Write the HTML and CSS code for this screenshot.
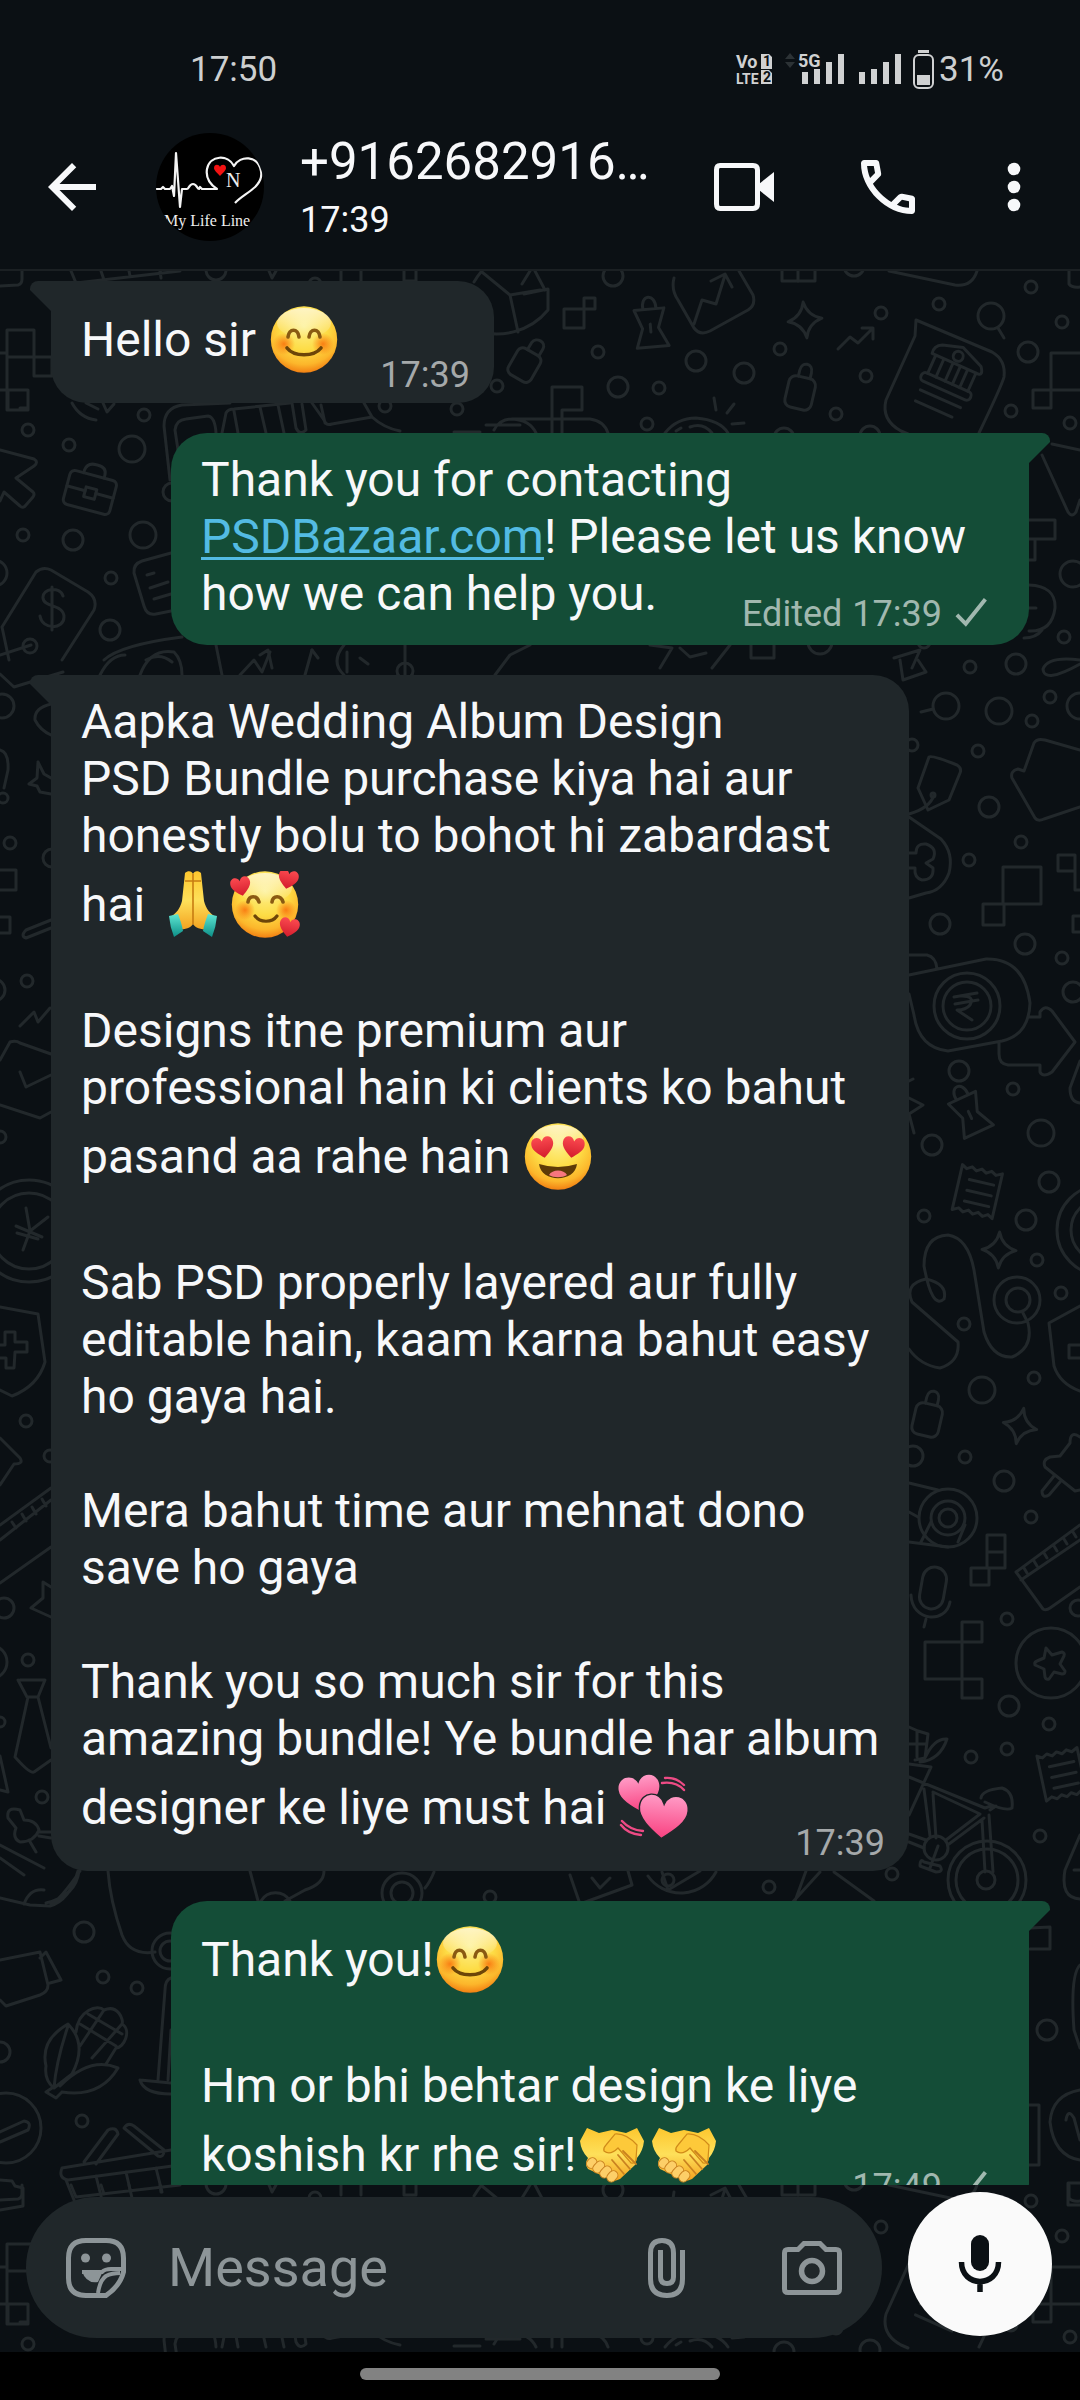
FILE: index.html
```html
<!DOCTYPE html>
<html lang="en">
<head>
<meta charset="utf-8">
<meta name="viewport" content="width=device-width, initial-scale=1">
<title>Chat</title>
<link rel="stylesheet" href="styles.css">
</head>
<body>
<svg class="defs" aria-hidden="true">
  <defs>
    <radialGradient id="face" cx="0.5" cy="0.3" r="0.72">
      <stop offset="0" stop-color="#fdf08e"/>
      <stop offset="0.5" stop-color="#fddc45"/>
      <stop offset="0.8" stop-color="#fcb62b"/>
      <stop offset="1" stop-color="#f0780f"/>
    </radialGradient>
    <linearGradient id="shine" x1="0" y1="0" x2="0" y2="1">
      <stop offset="0" stop-color="#fff" stop-opacity="0.65"/>
      <stop offset="1" stop-color="#fff" stop-opacity="0"/>
    </linearGradient>
    <radialGradient id="blush">
      <stop offset="0" stop-color="#f9700c" stop-opacity="0.85"/>
      <stop offset="1" stop-color="#f9700c" stop-opacity="0"/>
    </radialGradient>
    <linearGradient id="red" x1="0" y1="0" x2="0" y2="1">
      <stop offset="0" stop-color="#fb4a50"/>
      <stop offset="1" stop-color="#d31c2c"/>
    </linearGradient>
    <linearGradient id="pink" x1="0" y1="0" x2="0" y2="1">
      <stop offset="0" stop-color="#ff9bc6"/>
      <stop offset="1" stop-color="#f9407f"/>
    </linearGradient>
    <linearGradient id="skin" x1="0" y1="0" x2="0" y2="1">
      <stop offset="0" stop-color="#fdc62e"/>
      <stop offset="0.5" stop-color="#fee05a"/>
      <stop offset="1" stop-color="#f3a11f"/>
    </linearGradient>
    <linearGradient id="teal" x1="0" y1="0" x2="0" y2="1">
      <stop offset="0" stop-color="#5fe6d3"/>
      <stop offset="1" stop-color="#0c8f87"/>
    </linearGradient>
    <path id="heart" d="M0 9C-5 5-10 1-10-4C-10-11-2-12 0-6C2-12 10-11 10-4C10 1 5 5 0 9Z"/>
    <symbol id="e-blush" viewBox="0 0 72 67">
      <circle cx="36" cy="33.500" r="33.200" fill="url(#face)"/>
      <ellipse cx="36" cy="17" rx="27" ry="15" fill="url(#shine)"/>
      <circle cx="16" cy="38" r="11" fill="url(#blush)"/>
      <circle cx="55" cy="38" r="11" fill="url(#blush)"/>
      <path d="M20 31C21 22 30 22 31 31M41 31C42 22 51 22 52 31" fill="none" stroke="#8a5a12" stroke-width="3.600" stroke-linecap="round"/>
      <path d="M19 42C26 51 46 51 53 42" fill="none" stroke="#6d4508" stroke-width="3.600" stroke-linecap="round"/>
    </symbol>
    <symbol id="e-love" viewBox="0 0 72 67">
      <circle cx="36" cy="33.500" r="33.200" fill="url(#face)"/>
      <ellipse cx="36" cy="17" rx="27" ry="15" fill="url(#shine)"/>
      <circle cx="16" cy="39" r="10" fill="url(#blush)"/>
      <circle cx="57" cy="39" r="10" fill="url(#blush)"/>
      <path d="M19 31C20 24 28 24 30 31M43 31C44 24 52 24 54 31" fill="none" stroke="#8a5a12" stroke-width="3.600" stroke-linecap="round"/>
      <path d="M26 45C31 52 43 52 48 45" fill="none" stroke="#6d4508" stroke-width="3.200" stroke-linecap="round"/>
      <use href="#heart" fill="url(#red)" transform="translate(12 16) rotate(-12)"/>
      <use href="#heart" fill="url(#red)" transform="translate(59 9) rotate(12)"/>
      <use href="#heart" fill="url(#red)" transform="translate(60 57) rotate(12)"/>
    </symbol>
    <symbol id="e-eyes" viewBox="0 0 72 67">
      <circle cx="36" cy="33.500" r="33.200" fill="url(#face)"/>
      <ellipse cx="36" cy="15" rx="25" ry="13" fill="url(#shine)"/>
      <use href="#heart" fill="url(#red)" transform="translate(21 25) rotate(-10) scale(1.100)"/>
      <use href="#heart" fill="url(#red)" transform="translate(51 25) rotate(10) scale(1.100)"/>
      <path d="M17 41Q36 47 55 41C53 60 19 60 17 41Z" fill="#5d3a07"/>
      <path d="M27 52C30 46 42 46 45 52C40 55 32 55 27 52Z" fill="#f7767e"/>
    </symbol>
    <symbol id="e-pray" viewBox="0 0 72 67">
      <path d="M28 2C31-1 35 0 36 3C37 0 41-1 44 2L47 30C49 38 53 42 57 45L50 59C44 58 38 57 36 53C34 57 28 58 22 59L15 45C19 42 23 38 25 30Z" fill="url(#skin)"/>
      <path d="M36 3V53M28 10H44" fill="none" stroke="#c77c12" stroke-width="1.600"/>
      <path d="M12 45L21 43C23 48 25 54 26 60L17 66Q13 56 12 45ZM60 45L51 43C49 48 47 54 46 60L55 66Q59 56 60 45Z" fill="url(#teal)"/>
    </symbol>
    <symbol id="e-hearts" viewBox="0 0 72 67">
      <use href="#heart" fill="url(#pink)" transform="translate(22 21) rotate(-8) scale(2.050 1.900)"/>
      <use href="#heart" fill="url(#pink)" stroke="#20272a" stroke-width="0.600" transform="translate(45 44) rotate(5) scale(2.450 2.300)"/>
      <path d="M44 9Q58 7 66 16M47 4Q58 3 66 11M23 61Q10 60 3 51M25 57Q12 56 4 47" fill="none" stroke="#ee4b85" stroke-width="2.400" stroke-linecap="round"/>
    </symbol>
    <symbol id="e-shake" viewBox="0 0 72 67">
      <path d="M4 20L11 7L23 12L36 9L50 12L61 7L68 20Q67 30 61 37L59 44L44 58Q37 62 31 57L12 48Q8 43 12 37Q5 30 4 20Z" fill="url(#skin)"/>
      <path d="M30 24L39 13Q50 12 61 24L60 38Q60 43 55 42L42 27Q34 35 28 30Q27 27 30 24Z" fill="#fdc93a" stroke="#d18b19" stroke-width="1.200"/>
      <g fill="#fdcf68" stroke="#c98220" stroke-width="1">
        <rect x="10" y="38" width="11" height="9" rx="4.500" transform="rotate(-48 15 42)"/>
        <rect x="16" y="42" width="13" height="9" rx="4.500" transform="rotate(-48 22 46)"/>
        <rect x="23" y="47" width="13" height="9" rx="4.500" transform="rotate(-48 29 51)"/>
        <rect x="30" y="51" width="12" height="9" rx="4.500" transform="rotate(-48 36 55)"/>
      </g>
      <path d="M36 39L48 53M42 34L54 48M47 30L60 43" fill="none" stroke="#c98220" stroke-width="1.800" stroke-linecap="round"/>
    </symbol>
    <symbol id="tick" viewBox="0 0 54 42">
      <path d="M5 22L14 31L34 6" fill="none" stroke="currentColor" stroke-width="4"/>
    </symbol>
  </defs>
</svg>

<div class="phone">
  <div class="status">
    <span class="status-time">17:50</span>
    <svg class="status-icons" viewBox="734 46 202 46" role="img" aria-label="VoLTE, 5G signal, battery">
      <g fill="#d0d1d2">
        <text class="tiny-bold" x="736" y="67">Vo</text>
        <text class="tiny-narrow" x="736" y="83">LTE</text>
        <path d="M761 53h8l3 3v12h-11zM761 69h8l3 3v11h-11z"/>
        <text class="tiny-bold" x="798" y="66">5G</text>
        <path d="M802 71h6v12h-6zM814 68h6v15h-6zM826 61h6v22h-6zM838 53h6v30h-6zM859 71h6v12h-6zM871 68h6v15h-6zM883 61h6v22h-6zM895 53h6v30h-6z"/>
        <path d="M918 49h11v3h-11zM917 74h13v10h-13z"/>
      </g>
      <rect x="914" y="54" width="19" height="33" rx="5" fill="none" stroke="#d0d1d2" stroke-width="2"/>
      <path d="M785 58l5-6 5 6zM785 61l5 6 5-6z" fill="#2c3235"/>
      <g fill="#0b1014"><text class="tiny-digit" x="763" y="65">1</text><text class="tiny-digit" x="763" y="81">2</text></g>
    </svg>
    <span class="status-battery">31%</span>
  </div>

  <header class="topbar">
    <button class="icon-btn" aria-label="Back">
      <svg viewBox="0 0 24 24"><path fill="currentColor" d="M20 11H7.830l5.590-5.590L12 4l-8 8 8 8 1.410-1.410L7.830 13H20z"/></svg>
    </button>
    <svg class="avatar" viewBox="0 0 108 108" role="img" aria-label="Profile photo">
      <clipPath id="round"><circle cx="54" cy="54" r="54"/></clipPath>
      <g clip-path="url(#round)">
        <rect width="108" height="108"/>
        <path d="M0 56H5L7 54L9 56H14L16 53L18 63L20 20L24 74L26 56H31C33 56 33 51 37 51C41 51 41 56 43 56L44 54L46 56H61C52 50 50 42 51 36C54 22 72 21 78 33C84 22 102 22 105 38C108 54 88 60 79 70" fill="none" stroke="#f4f4f4" stroke-width="2.200" stroke-linejoin="round"/>
        <path d="M64 43C60 39 58 37 58 35C58 31 63 31 64 34C65 31 70 31 70 35C70 37 68 39 64 43Z" fill="#f31212"/>
        <g class="avatar-text" fill="#eee"><text x="70" y="54" font-size="20">N</text><text x="8" y="93" font-size="16">My Life Line</text></g>
      </g>
    </svg>
    <div class="contact">
      <h1 class="contact-name">+9162682916…</h1>
      <p class="contact-seen">17:39</p>
    </div>
    <div class="actions">
      <button class="icon-btn" aria-label="Video call">
        <svg viewBox="0 0 72 72"><path d="M12 14.500H45Q49.500 14.500 49.500 19V53Q49.500 57.500 45 57.500H12Q8.500 57.500 8.500 53V19Q8.500 14.500 12 14.500Z" fill="none" stroke="currentColor" stroke-width="5"/><path d="M51 33L66 21V51L51 39Z" fill="currentColor"/></svg>
      </button>
      <button class="icon-btn" aria-label="Voice call">
        <svg viewBox="0 0 24 24"><path fill="currentColor" d="M19.950 21q-3.120 0-6.180-1.360t-5.540-3.860-3.860-5.540T3 4.050Q3 3.600 3.300 3.300T4.050 3H8.100q.35 0 .62.240t.33.560l.65 3.500q.05.400-.020.680T9.400 8.450L6.980 10.900q.5.930 1.190 1.790t1.510 1.660q.78.780 1.630 1.440t1.790 1.210l2.350-2.350q.23-.23.590-.34t.71-.060l3.450.7q.35.100.58.360t.22.590v4.050q0 .45-.3.750T19.950 21zM6.030 9l1.650-1.650L7.250 5H5.020q.13 1.020.35 2.020T6.030 9zm8.940 8.950q.98.430 1.990.68t2.040.32v-2.200l-2.350-.47z"/></svg>
      </button>
      <button class="icon-btn icon-btn-last" aria-label="More options">
        <svg viewBox="0 0 24 24"><g fill="currentColor"><circle cx="12" cy="6" r="2.100"/><circle cx="12" cy="12" r="2.100"/><circle cx="12" cy="18" r="2.100"/></g></svg>
      </button>
    </div>
  </header>

  <main class="conversation">
    <svg class="wallpaper" viewBox="0 271 1080 2081" preserveAspectRatio="xMidYMin slice" aria-hidden="true">
      <defs>
        <path id="spark" d="M0-18Q3-4 17 0Q3 4 0 18Q-3 4-17 0Q-3-4 0-18Z"/>
        <path id="pin" d="M-16-24L14-24L7-5L16 14L-16 14L-9-5ZM-7-24C-9-40 7-40 6-24M-1-9V-1"/>
        <g id="receipt"><path d="M-22-22l5 3 5-3 5 3 5-3 5 3 5-3 5 3 6-3V24l-5-3-5 3-5-3-5 3-5-3-5 3-5-3-6 3ZM-12-9H13M-12 2H13M-12 13H13"/></g>
        <g id="case"><rect x="-24" y="-17" width="48" height="35" rx="5"/><path d="M-11-17V-20Q-10-28-1-28H1Q10-28 10-20V-17M-24 0H-5M6 0H24"/><rect x="-5" y="-4" width="11" height="10"/></g>
        <g id="lock"><rect x="-13" y="-10" width="27" height="32" rx="7"/><path d="M-5-10V-16C-5-26 7-26 7-16V-10"/></g>
        <g id="tile-head">
          <path d="M0 286L18 285Q22 284 22 279V271M71 271L76 283L180 271M101 271L104 280M129 271L130 276M160 271L161 278M269 271L272 278L276 271M341 271V281M361 271V281M404 271V281H416V271M535 271L545 290"/>
          <path d="M7 330H34V357H7ZM0 353H7M7 357V410M34 357H52V376H34ZM8 390H28V410H8ZM0 390H8M28 408H20"/>
          <circle cx="216" cy="270" r="10"/><circle cx="315" cy="284" r="6"/>
          <path d="M474 282Q500 238 560 250M482 272L510 295L540 290M510 295L518 332M470 329C500 340 530 332 548 310V289L524 294M522 284L530 271"/>
          <g transform="translate(525 362) rotate(30)"><rect x="-12" y="-12" width="26" height="30" rx="6"/><path d="M-4-12V-20C-3-28 9-28 9-20V-12"/></g>
          <path d="M72 403Q80 418 96 420M86 403L98 409M103 403L107 412L114 404"/>
          <path d="M170 480L164 426Q164 408 182 405L230 403M181 470L175 430Q176 420 186 419L208 416Q215 417 216 433M222 433L226 413Q228 409 234 409L290 403M234 411L238 433M260 407L266 433M278 405L284 433M292 403L296 428Q300 436 306 430L302 404M312 403L324 420Q326 426 332 424L372 417L364 403M372 417Q384 428 400 431M325 423L321 405"/>
          <path d="M454 432H480M494 430Q500 419 512 419H590Q604 421 608 433M512 419Q530 420 536 433M520 425H486"/>
          <rect x="564" y="309" width="20" height="19"/><rect x="584" y="298" width="11" height="11"/>
          <use href="#pin" transform="translate(652 333) rotate(-5)"/>
          <path d="M674 278Q671 290 678 300L694 328Q700 336 710 331L748 310Q756 305 753 295L739 271M694 324L702 300L716 304L725 275M711 281L725 274L732 287"/>
          <rect x="782" y="262" width="33" height="19"/><path d="M798 271V281"/>
          <path d="M889 271L955 285Q972 287 977 271M1069 271V284Q1072 288 1080 287"/>
          <use href="#spark" transform="translate(805 320) rotate(-6)"/>
          <path d="M838 349L850 337L858 343L873 328M862 328H873V339"/>
          <use href="#lock" transform="translate(801 387) rotate(13)"/>
          <path d="M552 433V387H582V410H562V433M714 398L716 410M734 404L727 413M732 424L744 423M665 433Q677 418 696 418Q720 420 728 433M690 427Q703 422 712 433M676 431L681 428"/>
          <path d="M916 320L992 352Q1006 360 1004 377Q1002 385 979 433M916 320L915 336L886 400Q881 420 901 431L908 434"/>
          <g transform="translate(951 375) rotate(24)"><path d="M-26-12Q-28-20-20-24L0-30L24-20Q30-12 24-12ZM-22-12V8M22-12V8M-13-12V8M-3-12V8M5-12V8M13-12V8"/><rect x="-27" y="8" width="54" height="9" rx="4"/><path d="M-22 26H22M-22 38H18"/><circle cx="-1" cy="-20" r="5"/></g>
          <circle cx="991" cy="316" r="13"/><path d="M998 328L1004 338"/>
          <path d="M1080 353H1051V408H1033V390H1080"/>
          <g><circle cx="144" cy="415" r="6"/><circle cx="28" cy="430" r="6"/><circle cx="385" cy="406" r="6"/><circle cx="457" cy="409" r="6"/><circle cx="497" cy="386" r="6"/><circle cx="613" cy="276" r="10"/><circle cx="598" cy="352" r="6"/><circle cx="696" cy="361" r="10"/><circle cx="744" cy="373" r="10"/><circle cx="618" cy="387" r="10"/><circle cx="659" cy="388" r="6"/><circle cx="647" cy="424" r="6"/><circle cx="780" cy="349" r="6"/><circle cx="881" cy="313" r="6"/><circle cx="939" cy="304" r="6"/><circle cx="1031" cy="287" r="6"/><circle cx="1062" cy="322" r="6"/><circle cx="1028" cy="352" r="10"/><circle cx="866" cy="376" r="6"/><circle cx="836" cy="414" r="6"/><circle cx="1011" cy="411" r="6"/><circle cx="1070" cy="423" r="6"/><circle cx="784" cy="438" r="10"/><circle cx="870" cy="436" r="10"/><circle cx="854" cy="266" r="10"/></g>
        </g>
      </defs>
      <use href="#tile-head"/>
      <use href="#tile-head" y="1914"/>

      <!-- between the header rows and the long message -->
      <g>
        <circle cx="69" cy="445" r="6"/><circle cx="132" cy="449" r="13"/><circle cx="23" cy="535" r="6"/><circle cx="73" cy="540" r="10"/><circle cx="143" cy="535" r="13"/><circle cx="111" cy="578" r="6"/><circle cx="110" cy="630" r="10"/><circle cx="-6" cy="573" r="13"/><circle cx="172" cy="492" r="9"/><circle cx="30" cy="646" r="7"/><circle cx="1073" cy="574" r="13"/><circle cx="1064" cy="637" r="6"/>
        <path d="M0 450L34 459Q39 462 34 466L16 478L33 492Q35 494 33 497L26 505Q23 509 20 506L4 492L0 501"/>
        <use href="#case" transform="translate(90 492) rotate(15)"/>
        <path d="M2 627L36 572Q43 566 51 570L88 592Q98 599 94 610L62 660M2 627L9 660M0 655L31 645M52 587V630M63 596C60 586 42 588 43 598C44 608 64 604 64 617C64 630 42 630 40 616"/>
        <path d="M171 553L142 561Q133 564 134 573L144 606Q147 616 156 614L171 611M147 575L154 573M150 588L168 582M154 599L171 594"/>
        <path d="M104 660Q120 645 182 637M146 660Q160 652 172 662M216 645L222 675M260 655L268 650L272 668M312 650L318 658M347 652V672M360 658L368 664"/>
        <path d="M1052 444L1080 450M1042 455L1068 512Q1072 518 1076 512L1080 500M1029 520H1055V539H1029M1029 539H1035V560H1029M1029 585Q1056 586 1055 608Q1052 632 1029 631M1029 608H1036M1042 630Q1036 638 1024 638"/>
        <path d="M0 674L14 687L63 672M100 675Q110 655 125 655M140 675Q150 648 174 652Q182 660 182 675M240 675L254 660L262 672L270 652M305 675L312 650M344 675Q330 662 344 645M405 645V675M495 675L510 655L530 645M650 645L672 648L660 668M680 648L690 657L706 653M712 668L730 645M751 645V658H774V645M894 658L920 650L912 668"/>
        <circle cx="405" cy="671" r="8"/><circle cx="820" cy="642" r="12"/><circle cx="924" cy="642" r="6"/>
      </g>

      <!-- right-hand strip -->
      <g>
        <circle cx="970" cy="667" r="6"/><circle cx="1016" cy="664" r="10"/><circle cx="946" cy="706" r="13"/><circle cx="999" cy="711" r="13"/><circle cx="1032" cy="721" r="6"/><circle cx="1050" cy="697" r="6"/><circle cx="1080" cy="706" r="13"/><circle cx="912" cy="745" r="6"/><circle cx="978" cy="751" r="6"/><circle cx="989" cy="807" r="10"/><circle cx="1021" cy="842" r="6"/><circle cx="969" cy="860" r="6"/><circle cx="940" cy="924" r="10"/><circle cx="1025" cy="944" r="10"/><circle cx="1062" cy="958" r="6"/><circle cx="1073" cy="992" r="10"/><circle cx="959" cy="1071" r="10"/><circle cx="1013" cy="1089" r="6"/><circle cx="1041" cy="1133" r="13"/><circle cx="932" cy="1145" r="10"/><circle cx="1049" cy="1182" r="10"/><circle cx="1026" cy="1220" r="10"/><circle cx="924" cy="1216" r="6"/><circle cx="1037" cy="1260" r="6"/><circle cx="1061" cy="1293" r="6"/><circle cx="964" cy="1324" r="6"/><circle cx="1034" cy="1378" r="6"/><circle cx="982" cy="1390" r="13"/><circle cx="913" cy="1456" r="10"/><circle cx="965" cy="1457" r="6"/><circle cx="1004" cy="1481" r="10"/><circle cx="1031" cy="1517" r="6"/><circle cx="1007" cy="1619" r="6"/><circle cx="1009" cy="1706" r="10"/><circle cx="1049" cy="1724" r="6"/><circle cx="1007" cy="1749" r="6"/><circle cx="971" cy="1757" r="6"/><circle cx="1040" cy="1836" r="6"/><circle cx="892" cy="1874" r="6"/><circle cx="1078" cy="1608" r="8"/><circle cx="1047" cy="2030" r="10"/>
        <path d="M900 660L903 680L926 672L918 660M921 712L933 709M1043 669Q1048 656 1080 660M1043 669Q1044 684 1080 664"/>
        <path d="M929 757Q932 755 957 765Q962 768 960 773L949 800L928 810L918 788ZM909 814Q930 808 934 795"/><circle cx="933" cy="795" r="2"/>
        <path d="M909 817L941 839Q954 853 949 873Q942 891 926 893L909 898M909 853H916Q916 843 926 844Q938 848 933 859L926 863L933 868Q934 880 922 880Q914 878 915 868H909"/>
        <path d="M1080 750L1045 740Q1037 738 1034 743L1024 771L1018 769Q1010 771 1012 778L1035 818Q1038 822 1044 819L1080 807"/>
        <path d="M1003 867H1041V904H1003ZM983 904H1004V925H983ZM1058 855H1075V871H1058ZM1075 870V890H1080M1080 916H1073V932H1080"/>
        <path d="M909 955H927Q936 957 937 969M909 975L986 959Q1024 958 1030 1003Q1029 1035 1002 1041L948 1051Q919 1048 914 1015L909 994M1030 1017H1040V1012Q1045 1004 1052 1011L1075 1042L1052 1072Q1043 1078 1040 1072V1065H1008Q999 1064 999 1054V1043"/>
        <circle cx="967" cy="1006" r="33"/><circle cx="967" cy="1006" r="24"/><path d="M954 997L977 993M955 1004L978 1000M962 996Q975 996 970 1005Q966 1010 957 1010L972 1020"/>
        <path d="M909 1081L913 1079M909 1098L923 1105L909 1114L914 1133M1080 1061L1070 1088Q1070 1102 1080 1103"/>
        <use href="#pin" transform="translate(973 1119) rotate(-25)"/>
        <use href="#receipt" transform="translate(979 1191) rotate(13)"/>
        <use href="#spark" transform="translate(999 1250) rotate(2)"/>
        <circle cx="1102" cy="1230" r="45"/><circle cx="1102" cy="1230" r="31"/>
        <path d="M909 1349Q920 1365 940 1368Q960 1362 958 1342L912 1302Q904 1284 926 1279Q948 1284 944 1299Q932 1310 924 1266Q924 1236 948 1235Q968 1238 974 1270L984 1332Q992 1358 1012 1357Q1034 1348 1028 1323L1022 1311"/>
        <circle cx="1017" cy="1300" r="23"/><circle cx="1018" cy="1300" r="12"/>
        <path d="M1080 1306L1049 1323L1054 1366Q1060 1384 1080 1391M1080 1345H1069V1358H1080"/>
        <use href="#lock" transform="translate(928 1414) rotate(13)"/>
        <use href="#spark" transform="translate(1020 1426) rotate(12)"/>
        <path d="M1080 1437Q1070 1430 1070 1443L1060 1456L1050 1457Q1042 1460 1045 1467L1075 1491L1080 1490M1054 1476L1042 1491Q1042 1499 1049 1495L1060 1482"/>
        <circle cx="948" cy="1518" r="29"/><circle cx="948" cy="1518" r="17"/><circle cx="948" cy="1518" r="9"/><path d="M909 1483L938 1490M909 1512L918 1517M909 1542L948 1547M931 1522L921 1542M965 1525L958 1542"/>
        <path d="M987 1535H1005V1568H987ZM987 1552H1005M971 1568H989V1585H971Z"/>
        <path d="M1080 1525L1016 1572L1043 1609Q1046 1611 1050 1608L1080 1587M1021 1580L1080 1540M1024 1568L1027 1573M1034 1561L1037 1566M1044 1553L1047 1558M1054 1546L1057 1551M1064 1539L1067 1544M1073 1532L1076 1537"/>
        <rect x="921" y="1567" width="24" height="42" rx="12" transform="rotate(10 933 1588)"/><path d="M911 1595C912 1622 946 1624 950 1602M926 1619L924 1627"/>
        <path d="M925 1642H962V1679H925ZM962 1622H982V1642H962ZM962 1679H982V1698H962Z"/>
        <circle cx="1051" cy="1663" r="35"/><path d="M1046 1648L1052 1655L1062 1652Q1065 1653 1064 1656L1060 1664L1065 1671Q1065 1674 1062 1674L1054 1672L1049 1679Q1046 1680 1045 1677L1044 1669L1035 1665Q1034 1662 1037 1661L1044 1658Z"/>
        <path d="M909 1727L918 1731L928 1734L925 1758L915 1760M917 1731V1757M909 1744H926M925 1758Q934 1738 947 1739Q940 1760 920 1762"/>
        <use href="#receipt" transform="translate(1063 1773) rotate(-12)"/>
        <circle cx="987" cy="1880" r="39"/><circle cx="987" cy="1880" r="31"/><circle cx="986" cy="1880" r="9"/><circle cx="936" cy="1848" r="12"/>
        <path d="M909 1764L931 1767L909 1815M909 1777L985 1808L991 1806M924 1789L930 1836M933 1794L936 1838M933 1792L980 1814L946 1840M982 1820L985 1872M989 1815L993 1872M949 1844L984 1818M909 1834L926 1840M909 1842L924 1848M981 1798Q982 1790 1002 1788Q1014 1792 1012 1808Q1006 1812 985 1802M990 1810L996 1806M938 1846L930 1868M924 1862Q920 1858 920 1866L936 1872Q944 1872 940 1866Z"/>
        <path d="M1080 1835L1065 1870Q1060 1898 1080 1899M1074 1870H1080M1030 1928L1050 1927V1949H1030"/>
        <path d="M1080 1965Q1070 1975 1074 2030L1080 2048M1080 2090Q1052 2095 1050 2122Q1054 2156 1080 2160M1066 2120Q1068 2108 1074 2118L1080 2140M1029 2105H1039V2165H1029M1080 2183H1068V2205H1080"/>
      </g>

      <!-- left-hand strip -->
      <g>
        <circle cx="2" cy="706" r="12"/><circle cx="10" cy="843" r="6"/><circle cx="27" cy="981" r="6"/><circle cx="-6" cy="990" r="11"/><circle cx="3" cy="798" r="5"/><circle cx="0" cy="1137" r="6"/><circle cx="26" cy="1421" r="6"/><circle cx="50" cy="1456" r="6"/><circle cx="28" cy="1660" r="6"/><circle cx="42" cy="1797" r="6"/><circle cx="4" cy="1608" r="10"/><circle cx="84" cy="1932" r="10"/><circle cx="103" cy="1977" r="6"/><circle cx="137" cy="1988" r="6"/><circle cx="82" cy="2121" r="6"/><circle cx="0" cy="1722" r="5"/><circle cx="0" cy="2052" r="10"/><circle cx="-10" cy="1662" r="17"/><circle cx="490" cy="1897" r="6"/><circle cx="769" cy="1887" r="6"/><circle cx="52" cy="858" r="9"/>
        <path d="M51 704Q34 708 35 720Q40 730 51 735M0 750Q9 752 8 770L4 788M38 762L44 774L51 778M38 762L37 778L29 784L37 786L40 792L51 794M0 870H16V890H0M0 917H10V933H0M51 920L26 930Q20 936 26 938L51 928M20 1026L34 1012L38 1022L50 1008"/>
        <path d="M0 1060L10 1042Q16 1040 20 1043L51 1054M20 1072L26 1087L51 1075M0 1105L40 1118L51 1112"/>
        <circle cx="29" cy="1231" r="51"/><circle cx="29" cy="1231" r="38"/><path d="M16 1226L42 1237M17 1233L38 1239M26 1208L30 1231L23 1250M48 1217L30 1231"/>
        <path d="M0 1307L38 1314L45 1362Q38 1386 12 1396L0 1390M0 1345H5V1332H15V1342H27V1352H15L14 1368H6V1358H0"/>
        <path d="M0 1438L20 1458Q24 1464 14 1464L0 1485"/>
        <path d="M51 1488L0 1525M51 1500L0 1540M51 1547L0 1583M12 1522L16 1528M22 1514L26 1521M32 1507L36 1514M42 1499L46 1506M51 1587L43 1582V1598L31 1608L51 1617"/>
        <path d="M20 1680H45L38 1697H27L18 1680M28 1697L15 1757Q30 1774 34 1772L51 1760M38 1697L51 1748M0 1756L8 1792L0 1790"/>
        <path d="M8 1818Q6 1806 20 1810L24 1820Q36 1820 39 1830Q34 1842 20 1842Q12 1838 16 1828ZM29 1840L36 1852M39 1836L51 1838M40 1832L51 1832M0 1845L44 1868M0 1858L24 1875M0 1898L30 1905L50 1906Q70 1900 78 1871M51 1904Q60 1900 80 1871M24 1904Q30 1888 44 1890M46 1903Q76 1896 79 1871"/>
        <path d="M108 1871Q110 1900 122 1935Q130 1956 155 1952M250 1871L258 1901M324 1871Q324 1884 305 1890L285 1901M261 1901A17 17 0 0 1 290 1901M434 1872Q430 1882 425 1888M570 1875L580 1904L632 1885L628 1871M592 1878L600 1888L610 1878M648 1876A40 40 0 0 0 716 1872M668 1890L662 1872M668 1890L700 1871M806 1871L795 1901M834 1872L874 1901M790 1905L820 1872"/>
        <circle cx="402" cy="1893" r="20"/><circle cx="402" cy="1893" r="11"/><circle cx="170" cy="1951" r="18"/><circle cx="170" cy="1951" r="10"/><circle cx="668" cy="1880" r="6"/>
        <path d="M0 1960L40 1952L48 1985Q48 1992 40 1995L6 2006L0 2000M40 1958L46 1952L61 1980L50 1983"/>
        <path d="M46 2066Q40 2040 68 2024Q88 2044 72 2074L54 2088Q44 2080 46 2066ZM52 2088L46 2092L56 2098L62 2092M54 2088Q56 2062 68 2026M62 2092Q100 2098 118 2068Q90 2056 60 2086M76 2032C78 2010 98 2004 104 2010C118 2004 124 2020 122 2024C132 2030 124 2048 116 2048L106 2064M80 2024L116 2046M88 2014L122 2034M80 2046L104 2010M92 2058L122 2024"/>
        <path d="M171 1978Q165 1980 165 1990L158 2080M168 2080L171 2030M140 2080L171 2083M140 2080Q144 2094 171 2094"/>
        <circle cx="6" cy="2128" r="35"/><path d="M0 2132L24 2121Q32 2122 28 2130L0 2142M0 2180L12 2181L15 2186L23 2188V2206L0 2210"/>
        <path d="M62 2168L171 2150M62 2168Q58 2178 68 2180L180 2165M84 2162L108 2130Q116 2126 118 2134L96 2164M124 2128Q128 2122 134 2126L164 2150Q164 2158 158 2156ZM66 2180L76 2205M96 2176L102 2200M126 2172L132 2198M156 2168L162 2192"/>
      </g>
    </svg>

    <div class="messages">
      <article class="bubble bubble-in">
        <p class="text">Hello sir <svg class="emoji" role="img" aria-label="😊"><use href="#e-blush"/></svg><span class="reserve"></span></p>
        <footer class="meta"><time>17:39</time></footer>
      </article>

      <article class="bubble bubble-out">
        <p class="text">Thank you for contacting <a href="#psdbazaar">PSDBazaar.com</a>! Please let us know how we can help you.</p>
        <footer class="meta"><span>Edited</span> <time>17:39</time><svg class="tick" role="img" aria-label="Sent"><use href="#tick"/></svg></footer>
      </article>

      <article class="bubble bubble-in">
        <p class="text">Aapka Wedding Album Design<br>PSD Bundle purchase kiya hai aur honestly bolu to bohot hi zabardast hai <svg class="emoji" role="img" aria-label="🙏"><use href="#e-pray"/></svg><svg class="emoji" role="img" aria-label="🥰"><use href="#e-love"/></svg><br><br>Designs itne premium aur professional hain ki clients ko bahut pasand aa rahe hain <svg class="emoji" role="img" aria-label="😍"><use href="#e-eyes"/></svg><br><br>Sab PSD properly layered aur fully editable hain, kaam karna bahut easy ho gaya hai.<br><br>Mera bahut time aur mehnat dono save ho gaya<br><br>Thank you so much sir for this amazing bundle! Ye bundle har album designer ke liye must hai <svg class="emoji" role="img" aria-label="💞"><use href="#e-hearts"/></svg></p>
        <footer class="meta"><time>17:39</time></footer>
      </article>

      <article class="bubble bubble-out">
        <p class="text">Thank you!<svg class="emoji" role="img" aria-label="😊"><use href="#e-blush"/></svg><br><br>Hm or bhi behtar design ke liye koshish kr rhe sir!<svg class="emoji" role="img" aria-label="🤝"><use href="#e-shake"/></svg><svg class="emoji" role="img" aria-label="🤝"><use href="#e-shake"/></svg></p>
        <footer class="meta"><time>17:49</time><svg class="tick" role="img" aria-label="Sent"><use href="#tick"/></svg></footer>
      </article>
    </div>

    <form class="composer">
      <div class="field">
        <button type="button" class="icon-btn" aria-label="Stickers">
          <svg viewBox="0 0 72 72"><path d="M26 8.500H46Q63.500 8.500 63.500 26V40Q60 54 46 63.500H26Q8.500 63.500 8.500 46V26Q8.500 8.500 26 8.500Z" fill="none" stroke="currentColor" stroke-width="5"/><circle cx="25.500" cy="26" r="4.500" fill="currentColor"/><circle cx="46.500" cy="26" r="4.500" fill="currentColor"/><path d="M22 40H42Q45 37 51 37H63M38 61Q40 48 46 44Q52 41 60 41" fill="none" stroke="currentColor" stroke-width="4"/><path d="M22 39H43L38 50Q26 52 22 39Z" fill="currentColor"/></svg>
        </button>
        <input class="input" type="text" placeholder="Message" aria-label="Message">
        <button type="button" class="icon-btn" aria-label="Attach">
          <svg viewBox="0 0 72 72"><path d="M51.500 18V47Q51.500 63.500 36 63.500Q19.500 63.500 19.500 47V21Q19.500 8.500 31 8.500Q42.500 8.500 42.500 21V45Q42.500 51.500 36 51.500Q29.500 51.500 29.500 45V18" fill="none" stroke="currentColor" stroke-width="5"/></svg>
        </button>
        <button type="button" class="icon-btn" aria-label="Camera">
          <svg viewBox="0 0 72 72"><path d="M12 17.500H22L28 11.500H44L50 17.500H60Q63.500 17.500 63.500 21V57Q63.500 60.500 60 60.500H12Q8.500 60.500 8.500 57V21Q8.500 17.500 12 17.500Z" fill="none" stroke="currentColor" stroke-width="5"/><circle cx="36" cy="39" r="10.500" fill="none" stroke="currentColor" stroke-width="5.500"/></svg>
        </button>
      </div>
      <button type="button" class="mic" aria-label="Record voice message">
        <svg viewBox="0 0 72 72"><rect x="27" y="7" width="18" height="36" rx="9" fill="currentColor"/><path d="M17.500 34C17.500 60 54.500 60 54.500 34M36 53V64" fill="none" stroke="currentColor" stroke-width="5.500"/></svg>
      </button>
    </form>
  </main>

  <div class="navbar"><div class="handle"></div></div>
</div>
</body>
</html>
```
FILE: styles.css
```css
* {
  box-sizing: border-box;
}

body {
  margin: 0;
  background: #0b1014;
  color: #f7f8fa;
  font-family: Roboto, "Noto Sans", sans-serif;
}

button {
  padding: 0;
  border: 0;
  background: none;
  color: inherit;
}

.defs {
  position: absolute;
  width: 0;
  height: 0;
}

.phone {
  display: flex;
  flex-direction: column;
  height: 100vh;
}

/* Status bar */
.status {
  display: flex;
  flex: none;
  align-items: center;
  height: 105px;
  padding: 34px 76px 0 190px;
  color: #cdcfd0;
  font-size: 35px;
}

.status-icons {
  width: 202px;
  height: 46px;
  margin-left: auto;
}

.status-battery {
  margin-left: 3px;
}

.tiny-bold {
  font: 700 18px Roboto, sans-serif;
}

.tiny-narrow {
  font: 700 14px "Liberation Sans Narrow", Roboto, sans-serif;
}

.tiny-digit {
  font: 700 14px Roboto, sans-serif;
}

/* Chat header */
.topbar {
  display: flex;
  flex: none;
  align-items: center;
  height: 166px;
  padding: 0 30px 0 36px;
  border-bottom: 2px solid #1b2023;
}

.icon-btn {
  flex: none;
  width: 72px;
  height: 72px;
}

.icon-btn svg,
.mic svg {
  display: block;
  width: 72px;
  height: 72px;
}

.avatar {
  flex: none;
  width: 108px;
  height: 108px;
  margin: 0 36px 0 48px;
}

.avatar-text {
  font-family: "Liberation Serif", serif;
}

.contact {
  flex: 1;
  min-width: 0;
}

.contact-name {
  margin: 0;
  font-size: 51px;
  font-weight: 400;
  line-height: 66px;
  white-space: nowrap;
}

.contact-seen {
  margin: 0;
  font-size: 36px;
  line-height: 51px;
}

.actions {
  display: flex;
  gap: 72px;
}

.icon-btn-last {
  margin-left: -18px;
}

/* Conversation */
.conversation {
  position: relative;
  display: flex;
  flex: 1;
  flex-direction: column;
  min-height: 0;
  overflow: hidden;
}

.wallpaper {
  position: absolute;
  inset: 0;
  width: 100%;
  height: 100%;
  fill: none;
  stroke: #22282b;
  stroke-width: 3;
  stroke-linecap: round;
  stroke-linejoin: round;
}

.messages {
  position: relative;
  display: flex;
  flex: 1;
  flex-direction: column;
  gap: 30px;
  min-height: 0;
  overflow: hidden;
  padding: 10px 51px 0;
}

.bubble {
  position: relative;
  display: grid;
  flex: none;
  max-width: 858px;
  padding: 18px 24px 7px 30px;
  border-radius: 36px;
}

.bubble-in {
  align-self: flex-start;
  border-top-left-radius: 0;
  background: #20272a;
}

.bubble-out {
  align-self: flex-end;
  width: 858px;
  border-top-right-radius: 0;
  background: #144d37;
}

.bubble::before {
  content: "";
  position: absolute;
  top: 0;
  width: 22px;
  height: 31px;
  background: inherit;
}

.bubble-in::before {
  right: calc(100% - 1px);
  border-top-left-radius: 8px;
  clip-path: polygon(0 0, 100% 0, 100% 100%, 0 9px);
}

.bubble-out::before {
  left: calc(100% - 1px);
  border-top-right-radius: 8px;
  clip-path: polygon(0 0, 100% 0, 100% 9px, 0 100%);
}

.text,
.meta {
  grid-area: 1 / 1;
}

.text {
  margin: 0;
  padding-bottom: 16px;
  font-size: 48px;
  line-height: 57px;
}

.text a {
  color: #53bbe3;
  text-decoration-thickness: 3px;
  text-underline-offset: 4px;
}

.reserve {
  display: inline-block;
  width: 130px;
}

.emoji {
  width: 72px;
  height: 67px;
  margin: 7px 0;
  vertical-align: -24px;
}

.meta {
  display: flex;
  gap: 10px;
  align-self: end;
  justify-self: end;
  color: #a5a9aa;
  font-size: 36px;
  line-height: 42px;
}

.bubble-out .meta {
  padding-bottom: 3px;
  color: #a1b8af;
}

.tick {
  width: 53px;
  height: 42px;
}

/* Composer */
.composer {
  position: relative;
  display: flex;
  flex: none;
  gap: 26px;
  padding: 7px 28px 14px 26px;
}

.field {
  display: flex;
  flex: 1;
  align-items: center;
  min-width: 0;
  height: 141px;
  margin-top: 5px;
  padding: 0 34px;
  border-radius: 71px;
  background: #20272a;
  color: #8d9598;
}

.input {
  flex: 1;
  min-width: 0;
  padding: 0 0 0 36px;
  border: 0;
  outline: 0;
  background: none;
  color: #f7f8fa;
  font: 400 54px Roboto, sans-serif;
}

.input::placeholder {
  color: #8d9598;
  opacity: 1;
}

.field .icon-btn + .icon-btn {
  margin-left: 73px;
}

.mic {
  display: grid;
  flex: none;
  place-items: center;
  width: 144px;
  height: 144px;
  border-radius: 50%;
  background: #fafafa;
  color: #0b1014;
}

/* System navigation */
.navbar {
  display: flex;
  flex: none;
  justify-content: center;
  align-items: center;
  height: 48px;
  padding-bottom: 4px;
  background: #000;
}

.handle {
  width: calc(100% / 3);
  height: 12px;
  border-radius: 6px;
  background: #828282;
}
```
